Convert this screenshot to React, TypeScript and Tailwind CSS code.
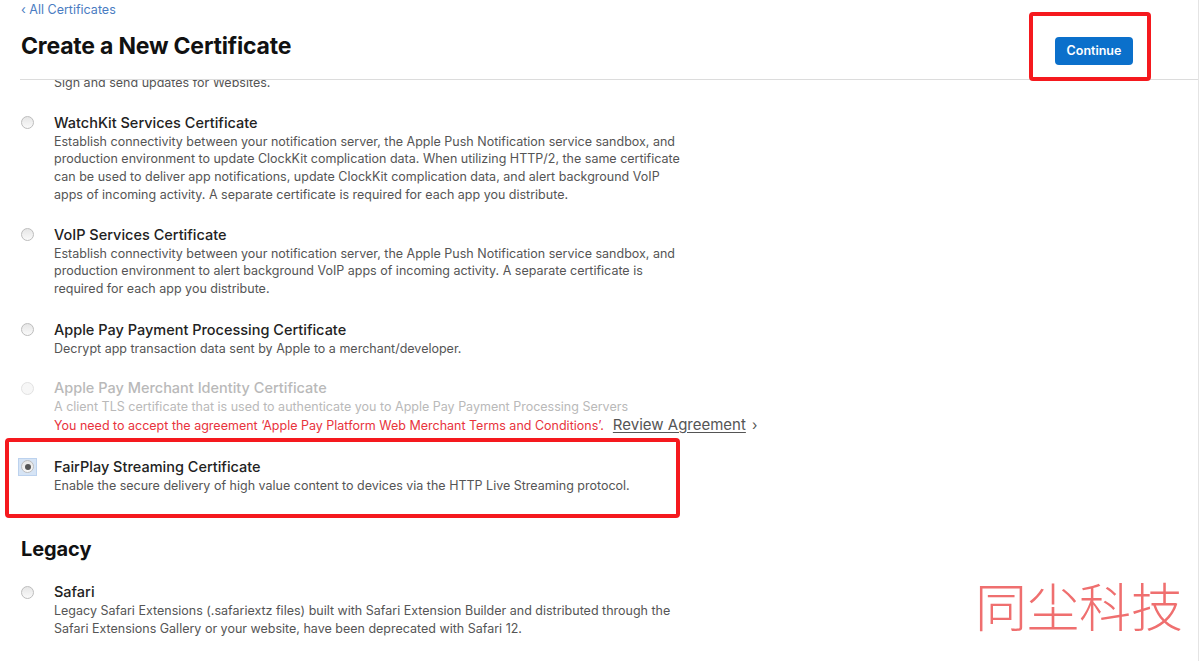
import React from 'react'

type Cert = {
  title: string
  lines: string[]
  gap: string
  disabled?: boolean
  selected?: boolean
  warning?: boolean
}

const certs: Cert[] = [
  {
    title: 'WatchKit Services Certificate',
    gap: 'mt-[21px]',
    lines: [
      'Establish connectivity between your notification server, the Apple Push Notification service sandbox, and',
      'production environment to update ClockKit complication data. When utilizing HTTP/2, the same certificate',
      'can be used to deliver app notifications, update ClockKit complication data, and alert background VoIP',
      'apps of incoming activity. A separate certificate is required for each app you distribute.',
    ],
  },
  {
    title: 'VoIP Services Certificate',
    gap: 'mt-[21px]',
    lines: [
      'Establish connectivity between your notification server, the Apple Push Notification service sandbox, and',
      'production environment to alert background VoIP apps of incoming activity. A separate certificate is',
      'required for each app you distribute.',
    ],
  },
  {
    title: 'Apple Pay Payment Processing Certificate',
    gap: 'mt-[22px]',
    lines: ['Decrypt app transaction data sent by Apple to a merchant/developer.'],
  },
  {
    title: 'Apple Pay Merchant Identity Certificate',
    gap: 'mt-[21px]',
    disabled: true,
    warning: true,
    lines: ['A client TLS certificate that is used to authenticate you to Apple Pay Payment Processing Servers'],
  },
  {
    title: 'FairPlay Streaming Certificate',
    gap: 'mt-[22px]',
    selected: true,
    lines: ['Enable the secure delivery of high value content to devices via the HTTP Live Streaming protocol.'],
  },
]

function Radio({ selected, disabled }: { selected?: boolean; disabled?: boolean }) {
  const dot = (
    <span
      className={`flex h-[13px] w-[13px] items-center justify-center rounded-full border ${
        disabled ? 'border-[#e2e2e2] bg-[#f7f7f7]' : 'border-[#bdbdbd] bg-gradient-to-b from-[#e6e6e6] to-[#fafafa]'
      }`}
    >
      {selected && <span className="h-[6px] w-[6px] rounded-full bg-[#555]" />}
    </span>
  )
  if (selected) {
    return (
      <span className="-ml-[3px] flex h-[18px] w-[19px] items-center justify-center border border-[#bcd2ee] bg-[#d6e4f5]">
        {dot}
      </span>
    )
  }
  return dot
}

function CertItem({ cert }: { cert: Cert }) {
  return (
    <div className={`relative flex ${cert.gap}`}>
      <div className="flex h-[20px] w-[33px] shrink-0 items-center">
        <Radio selected={cert.selected} disabled={cert.disabled} />
      </div>
      <div>
        <div
          className={`text-[14.5px] font-medium leading-[20px] ${
            cert.disabled ? 'text-[#b9b9b9]' : 'text-[#222]'
          }`}
        >
          {cert.title}
        </div>
        {cert.lines.map((line) => (
          <div
            key={line}
            className={`text-[12.5px] leading-[17.7px] ${cert.disabled ? 'text-[#b9b9b9]' : 'text-[#555]'}`}
          >
            {line}
          </div>
        ))}
        {cert.warning && (
          <div className="flex items-baseline text-[12.5px] leading-[17.7px] text-[#e8333c]">
            <span>You need to accept the agreement ‘Apple Pay Platform Web Merchant Terms and Conditions’.</span>
            <span className="ml-[9px] text-[15px] text-[#555] underline underline-offset-2">Review Agreement</span>
            <span className="ml-[6px] text-[14px] text-[#555]">›</span>
          </div>
        )}
      </div>
      {cert.selected && (
        <div className="pointer-events-none absolute -left-[16px] -top-[19px] h-[80px] w-[675px] rounded-[4px] border-[4px] border-[#f5191e]" />
      )}
    </div>
  )
}

export default function App() {
  return (
    <div className="relative h-[661px] w-[1200px] overflow-hidden bg-white font-[Inter,'Noto_Sans',sans-serif] antialiased">
      <div className="flex h-full w-[1199px] flex-col border-r border-[#e4e4e4]">
        {/* header */}
        <div className="relative z-10 ml-[20px] h-[80px] shrink-0 border-b border-[#dcdcdc] bg-white">
          <div className="pl-[1px] pt-[1px] text-[12.5px] leading-[18px] text-[#4a7cc2]">‹ All Certificates</div>
          <div className="flex items-start justify-between pr-[65px]">
            <h1 className="mt-[11px] pl-[1px] text-[23px] font-bold leading-[32px] tracking-[-0.2px] text-[#111]">
              Create a New Certificate
            </h1>
            <div className="relative mt-[18px]">
              <button className="h-[28px] w-[78px] rounded-[4px] bg-[#0b70cb] text-[12.5px] font-semibold text-white">
                Continue
              </button>
              <div className="pointer-events-none absolute -left-[26px] -right-[18px] -top-[25px] -bottom-[16px] rounded-[4px] border-[4px] border-[#f5191e]" />
            </div>
          </div>
        </div>

        {/* scrolled list */}
        <div className="relative flex-1 overflow-hidden px-[21px]">
          <div className="-mt-[6px] pl-[33px] text-[12.5px] leading-[17.7px] text-[#555]">
            Sign and send updates for Websites.
          </div>
          {certs.map((c) => (
            <CertItem key={c.title} cert={c} />
          ))}

          <h2 className="mt-[41px] text-[20px] font-bold leading-[28px] tracking-[-0.1px] text-[#111]">Legacy</h2>
          <div className="mt-[19px] flex">
            <div className="flex h-[20px] w-[33px] shrink-0 items-center">
              <Radio />
            </div>
            <div>
              <div className="text-[14.5px] font-medium leading-[20px] text-[#222]">Safari</div>
              <div className="text-[12.5px] leading-[17.7px] text-[#555]">
                Legacy Safari Extensions (.safariextz files) built with Safari Extension Builder and distributed through the
              </div>
              <div className="text-[12.5px] leading-[17.7px] text-[#555]">
                Safari Extensions Gallery or your website, have been deprecated with Safari 12.
              </div>
            </div>
          </div>
        </div>
      </div>

      {/* watermark */}
      <div className="pointer-events-none absolute left-[975px] top-[575px] font-['Noto_Sans_CJK_SC',sans-serif] text-[52px] font-light leading-[60px] text-[#ef6f6f]">
        同尘科技
      </div>
    </div>
  )
}
